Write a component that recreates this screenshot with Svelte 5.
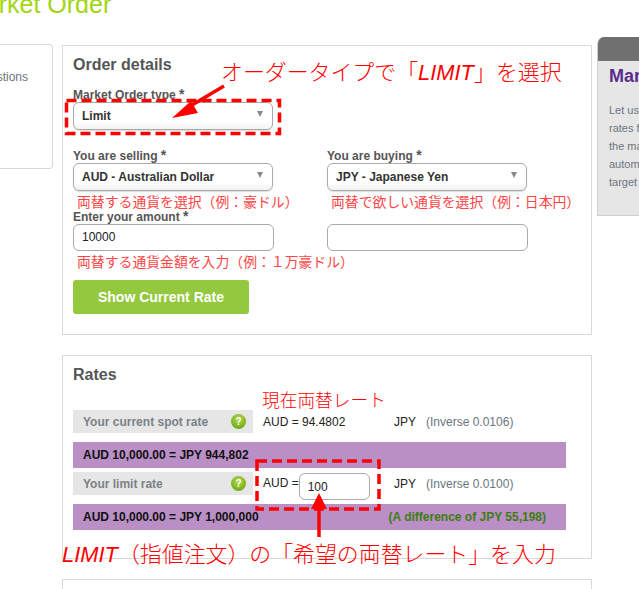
<script>
  const sidebarLines = ['Let us monitor', 'rates for you', 'the market and', 'automatically', 'target rate'];
</script>

<div class="page">
  <h1>Market Order</h1>

  <div class="columns">
    <aside class="left-nav"><span>Questions</span></aside>

    <main>
      <section class="panel order">
        <h2>Order details</h2>
        <div class="field type-field">
          <label>Market Order type <b>*</b></label>
          <div class="select"><span>Limit</span><i></i></div>
        </div>

        <div class="pair">
          <div class="field">
            <label>You are selling <b>*</b></label>
            <div class="select"><span>AUD - Australian Dollar</span><i></i></div>
            <p class="note">両替する通貨を選択（例：豪ドル）</p>
          </div>
          <div class="field">
            <label>You are buying <b>*</b></label>
            <div class="select"><span>JPY - Japanese Yen</span><i></i></div>
            <p class="note">両替で欲しい通貨を選択（例：日本円）</p>
          </div>
          <div class="field">
            <label>Enter your amount <b>*</b></label>
            <div class="input">10000</div>
            <p class="note">両替する通貨金額を入力（例：１万豪ドル）</p>
          </div>
          <div class="field">
            <label class="blank">&nbsp;</label>
            <div class="input"></div>
          </div>
        </div>

        <button>Show Current Rate</button>
      </section>

      <section class="panel rates">
        <h2>Rates</h2>
        <div class="rate-row first">
          <div class="rate-label">Your current spot rate <span class="help">?</span></div>
          <span class="aud">AUD = 94.4802</span>
          <span class="jpy">JPY</span>
          <span class="inverse">(Inverse 0.0106)</span>
        </div>
        <div class="total">AUD 10,000.00 = JPY 944,802</div>
        <div class="rate-row limit">
          <div class="rate-label">Your limit rate <span class="help">?</span></div>
          <span class="aud limit-aud">AUD =<span class="rate-input">100</span></span>
          <span class="jpy">JPY</span>
          <span class="inverse">(Inverse 0.0100)</span>
        </div>
        <div class="total last">AUD 10,000.00 = JPY 1,000,000 <span class="diff">(A difference of JPY 55,198)</span></div>
      </section>

      <section class="panel next"></section>
    </main>

    <aside class="side">
      <div class="side-head"></div>
      <h3>Market Order</h3>
      {#each sidebarLines as line}
        <p>{line}</p>
      {/each}
    </aside>
  </div>

  <!-- annotations drawn over the page -->
  <svg class="marks" width="639" height="589" viewBox="0 0 639 589">
    <rect x="66.5" y="100.5" width="213" height="33" fill="none" stroke="#f00" stroke-width="3.5" stroke-dasharray="10 5" />
    <rect x="257" y="461" width="122" height="48" fill="none" stroke="#f00" stroke-width="3.5" stroke-dasharray="10 5" />
    <path d="M224 86 L187 108" stroke="#f00" stroke-width="3.5" fill="none" />
    <path d="M172 118 L191 101 L198 113 Z" fill="#f00" />
    <path d="M319 537 L319 508" stroke="#f00" stroke-width="3.5" fill="none" />
    <path d="M319 493 L311 509 L327 509 Z" fill="#f00" />
  </svg>
  <div class="callout c1">オーダータイプで「<em>LIMIT</em>」を選択</div>
  <div class="callout c2">現在両替レート</div>
  <div class="callout c3"><em>LIMIT</em>（指値注文）の「希望の両替レート」を入力</div>
</div>

<style>
:global(body) {
  margin: 0;
  background: #fff;
}

.page {
  position: relative;
  width: 639px;
  height: 589px;
  overflow: hidden;
  font-family: "Liberation Sans", Arial, sans-serif;
  font-size: 12px;
  color: #555;
}

h1 {
  margin: -12px 0 0 -36px;
  height: 56px;
  font-size: 25px;
  line-height: 32px;
  font-weight: normal;
  color: #a2d510;
  white-space: nowrap;
}

.columns {
  display: flex;
  align-items: flex-start;
}

.left-nav {
  flex: none;
  width: 53px;
  height: 125px;
  box-sizing: border-box;
  border: 1px solid #d8d8d8;
  border-left: 0;
  border-radius: 0 4px 4px 0;
  padding-top: 25px;
  overflow: hidden;
  white-space: nowrap;
  display: flex;
  justify-content: flex-end;
  margin-right: 9px;
  color: #6b7580;
}

.left-nav span {
  margin-right: 24px;
}

main {
  flex: none;
  width: 530px;
  margin-top: 1px;
}

.panel {
  box-sizing: border-box;
  border: 1px solid #d8d8d8;
  padding: 0 10px;
}

h2 {
  margin: 0;
  font-size: 16px;
  line-height: 20px;
  color: #555;
}

.order {
  height: 290px;
  padding-top: 9px;
}

.field {
  position: relative;
}

.field label {
  display: block;
  font-size: 12px;
  font-weight: bold;
  line-height: 14px;
  color: #555;
}

.field label b {
  font-size: 14px;
  line-height: 10px;
}

.type-field {
  margin-top: 13px;
  margin-bottom: 19px;
}

.pair {
  display: grid;
  grid-template-columns: 201px 201px;
  column-gap: 53px;
}

.select {
  box-sizing: border-box;
  width: 200px;
  height: 28px;
  border: 1px solid #aaa;
  border-radius: 6px;
  background: linear-gradient(#fff 70%, #f2f2f2);
  display: flex;
  align-items: center;
  justify-content: space-between;
  padding: 0 9px 0 8px;
  font-weight: bold;
  color: #333;
  box-shadow: 0 1px 1px #ddd;
}

.select i {
  width: 0;
  height: 0;
  border-left: 3.5px solid transparent;
  border-right: 3.5px solid transparent;
  border-top: 6px solid #888;
  margin-bottom: 4px;
}

.input {
  box-sizing: border-box;
  width: 201px;
  height: 27px;
  border: 1px solid #aaa;
  border-radius: 6px;
  padding: 0 8px;
  line-height: 25px;
  color: #222;
}

.note {
  margin: 0 0 0 4px;
  height: 18px;
  white-space: nowrap;
  font-family: "Noto Sans CJK JP", sans-serif;
  font-size: 13.85px;
  line-height: 20px;
  color: #f44;
}

.field:nth-child(n + 3) .note {
  height: 21px;
}

.field:nth-child(n + 3) label {
  padding-top: 1px;
}

button {
  display: block;
  width: 176px;
  height: 34px;
  margin-top: 8px;
  border: 0;
  border-radius: 3px;
  background: #93c83f;
  color: #fff;
  font: bold 14px "Liberation Sans", Arial, sans-serif;
}

.rates {
  height: 204px;
  margin-top: 20px;
  padding-top: 9px;
}

.rate-row {
  display: flex;
  align-items: center;
  height: 23px;
  color: #222;
}

.rate-row.first {
  margin-top: 25px;
}

.rate-row.limit {
  margin-top: 4px;
}

.rate-label {
  flex: none;
  box-sizing: border-box;
  width: 180px;
  height: 23px;
  background: #e6e6e6;
  padding: 0 7px 0 10px;
  display: flex;
  align-items: center;
  justify-content: space-between;
  font-weight: bold;
  color: #7a8288;
  margin-right: 10px;
}

.help {
  width: 15px;
  height: 15px;
  border-radius: 50%;
  background: radial-gradient(circle at 50% 35%, #b6dc4a, #5c9a0a);
  color: #fff;
  font-size: 10px;
  line-height: 15px;
  text-align: center;
}

.aud {
  width: 131px;
  flex: none;
}

.limit-aud {
  display: flex;
  align-items: flex-start;
  height: 23px;
  line-height: 23px;
}

.rate-input {
  flex: none;
  box-sizing: border-box;
  width: 71px;
  height: 27px;
  margin-top: 1px;
  border: 1px solid #aaa;
  border-radius: 6px;
  background: #fff;
  padding: 2px 8px 0;
  line-height: 23px;
  color: #222;
}

.jpy {
  width: 32px;
  flex: none;
}

.inverse {
  color: #6b7580;
  white-space: nowrap;
}

.total {
  box-sizing: border-box;
  width: 493px;
  height: 26px;
  margin-top: 9px;
  background: #b98fc5;
  padding-left: 10px;
  font-weight: bold;
  line-height: 26px;
  color: #111;
  white-space: nowrap;
}

.total.last {
  display: flex;
}

.diff {
  margin-left: auto;
  margin-right: 20px;
  color: #3d7d10;
}

.next {
  height: 40px;
  margin-top: 20px;
}

.side {
  flex: none;
  width: 200px;
  height: 179px;
  box-sizing: border-box;
  margin: -7px 0 0 5px;
  background: #e6e6e6;
  border-left: 1px solid #d0d0d0;
  border-bottom: 1px solid #d0d0d0;
  border-radius: 7px 0 0 0;
  overflow: hidden;
  white-space: nowrap;
}

.side-head {
  height: 24px;
  background: #707070;
}

.side h3 {
  margin: 4px 0 14px 11px;
  font-size: 18px;
  line-height: 22px;
  color: #5b2d8e;
}

.side p {
  margin: 0 0 0 11px;
  font-size: 11px;
  line-height: 18px;
  color: #6b7580;
}

.marks {
  position: absolute;
  left: 0;
  top: 0;
  pointer-events: none;
}

.callout {
  position: absolute;
  font-family: "Noto Sans CJK JP", sans-serif;
  font-weight: 300;
  font-size: 21.9px;
  line-height: 30px;
  color: #f00;
  white-space: nowrap;
}

.callout em {
  font-family: "Liberation Sans", Arial, sans-serif;
}

.c1 {
  left: 221px;
  top: 56px;
}

.c2 {
  left: 262px;
  top: 384px;
  font-size: 17.7px;
}

.c3 {
  left: 62px;
  top: 538px;
}
</style>
